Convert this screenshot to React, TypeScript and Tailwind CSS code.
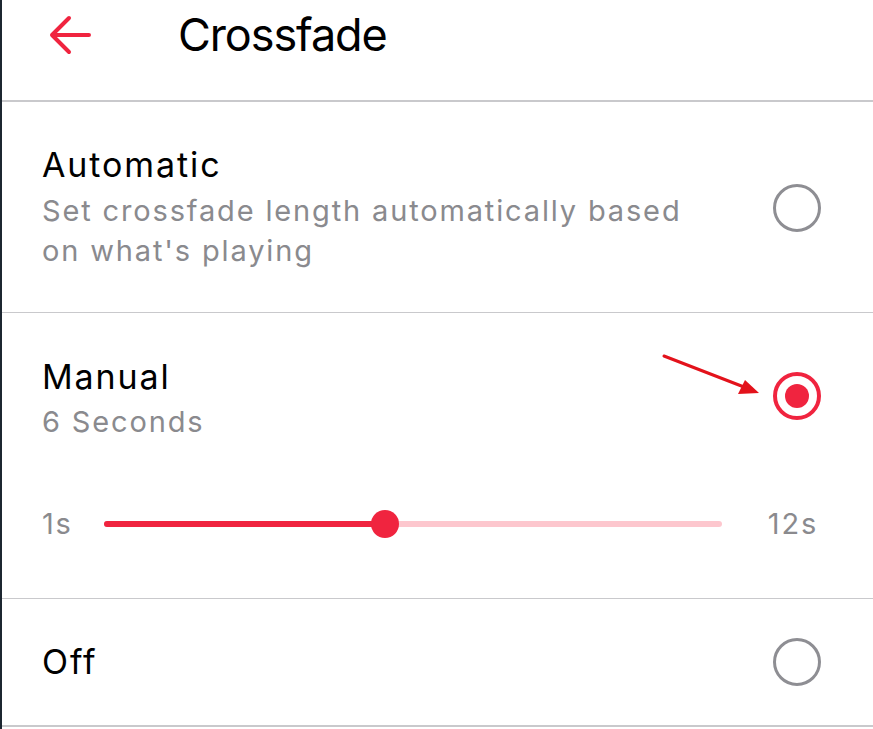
import React from "react";

const RED = "#f0243f";

function Radio({ selected }: { selected?: boolean }) {
  if (selected) {
    return (
      <div className="w-12 h-12 rounded-full border-[4px] border-[#f0243f] flex items-center justify-center shrink-0">
        <div className="w-6 h-6 rounded-full bg-[#f0243f]" />
      </div>
    );
  }
  return <div className="w-12 h-12 rounded-full border-[3.5px] border-[#8e8e93] shrink-0" />;
}

export default function App() {
  return (
    <div
      className="relative w-[873px] h-[729px] bg-white border-l-2 border-[#1c2630] flex flex-col overflow-hidden"
      style={{ fontFamily: "Inter, 'Liberation Sans', sans-serif" }}
    >
      {/* Header */}
      <div className="h-[100px] flex items-start shrink-0">
        <svg width="44" height="44" viewBox="0 0 44 44" className="ml-[46px] mt-[13px]" fill="none">
          <path d="M4 22 H41 M21 5 L4 22 L21 39" stroke={RED} strokeWidth="4" strokeLinecap="round" strokeLinejoin="round" />
        </svg>
        <div className="ml-[86px] mt-[12px] text-[45px] leading-none text-black tracking-[-1.1px]">Crossfade</div>
      </div>
      <div className="h-[2px] bg-[#c9c9cc] shrink-0" />

      {/* Automatic */}
      <div className="h-[210px] flex items-start pl-[40px] pr-[52px] shrink-0">
        <div className="flex-1 pt-[43px]">
          <div className="text-[34px] leading-[40px] text-black tracking-[1.9px]">Automatic</div>
          <div className="text-[29px] leading-[40px] text-[#8a8a8e] mt-[6px] tracking-[1.85px]">
            Set crossfade length automatically based
            <br />
            on what's playing
          </div>
        </div>
        <div className="pt-[82px]">
          <Radio />
        </div>
      </div>
      <div className="h-px bg-[#c9c9cc] shrink-0" />

      {/* Manual */}
      <div className="h-[285px] flex flex-col pl-[40px] pr-[52px] shrink-0">
        <div className="flex items-start">
          <div className="flex-1 pt-[44px]">
            <div className="text-[34px] leading-[40px] text-black tracking-[1.9px]">Manual</div>
            <div className="text-[29px] leading-[40px] text-[#8a8a8e] mt-[5px] tracking-[1.85px]">6 Seconds</div>
          </div>
          <div className="pt-[59px]">
            <Radio selected />
          </div>
        </div>
        <div className="flex items-center mt-[67px] pr-[3px]">
          <div className="text-[29px] leading-none text-[#8a8a8e] w-[62px] tracking-[1.8px]">1s</div>
          <div className="relative flex-1 h-[6px] rounded-full bg-[#fdc7ce]">
            <div className="absolute left-0 top-0 h-[6px] w-[281px] rounded-full bg-[#f0243f]" />
            <div className="absolute left-[267px] -top-[11px] w-[28px] h-[28px] rounded-full bg-[#f0243f]" />
          </div>
          <div className="text-[29px] leading-none text-[#8a8a8e] w-[96px] text-right tracking-[1.8px]">12s</div>
        </div>
      </div>
      <div className="h-px bg-[#c9c9cc] shrink-0" />

      {/* Off */}
      <div className="h-[126px] flex items-center pl-[40px] pr-[52px] shrink-0">
        <div className="flex-1 text-[34px] leading-[40px] text-black tracking-[1.9px]">Off</div>
        <Radio />
      </div>
      <div className="h-[2px] bg-[#c9c9cc] shrink-0" />

      {/* annotation arrow */}
      <svg className="absolute left-[650px] top-[345px]" width="120" height="60" viewBox="0 0 120 60" fill="none">
        <line x1="12" y1="11" x2="92" y2="42" stroke="#e3121b" strokeWidth="3" strokeLinecap="round" />
        <polygon points="107,48 86,49 93,35" fill="#e3121b" />
      </svg>
    </div>
  );
}
